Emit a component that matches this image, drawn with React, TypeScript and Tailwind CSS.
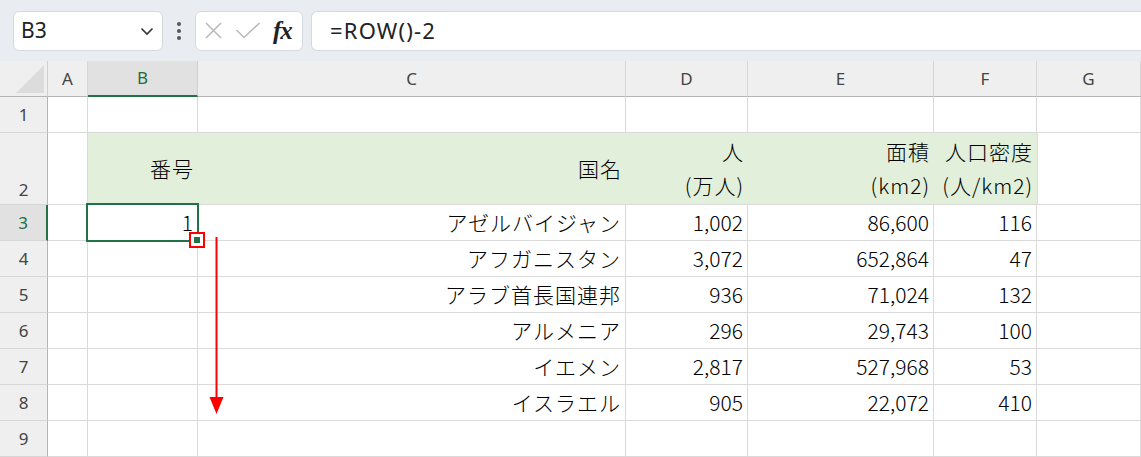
import React from "react";

const COLS = ["A", "B", "C", "D", "E", "F", "G"];

const rows: { n: number; c: string; d: string; e: string; f: string }[] = [
  { n: 3, c: "アゼルバイジャン", d: "1,002", e: "86,600", f: "116" },
  { n: 4, c: "アフガニスタン", d: "3,072", e: "652,864", f: "47" },
  { n: 5, c: "アラブ首長国連邦", d: "936", e: "71,024", f: "132" },
  { n: 6, c: "アルメニア", d: "296", e: "29,743", f: "100" },
  { n: 7, c: "イエメン", d: "2,817", e: "527,968", f: "53" },
  { n: 8, c: "イスラエル", d: "905", e: "22,072", f: "410" },
  { n: 9, c: "", d: "", e: "", f: "" },
];

const grid =
  "grid grid-cols-[48px_40px_110px_428px_122px_186px_103px_1fr]";
const cell = "border-r border-b border-[#dadada] px-1 flex items-center justify-end";
const rowHead =
  "border-r border-b border-r-[#b5b5b5] border-b-[#d6d6d6] bg-[#efefef] flex items-center justify-center text-[17px] text-[#444] font-['Noto_Sans',sans-serif]";
const head2 =
  "bg-[#e2efda] border-b border-[#dadada] flex flex-col items-end justify-end pr-1 pb-[2px] leading-[34px] tracking-[1px] whitespace-nowrap";

function FormulaBar() {
  return (
    <div className="h-[61px] bg-[#e9edf1] flex items-center pl-[13px] font-['Noto_Sans',sans-serif]">
      <div className="w-[150px] h-[40px] bg-white rounded-md border border-[#d6d9dd] flex items-center pl-[7px] pr-[8px] justify-between">
        <span className="text-[21px] text-[#222]">B3</span>
        <svg width="14" height="10" viewBox="0 0 14 10">
          <path d="M1.5 2.5 L7 8 L12.5 2.5" fill="none" stroke="#333" strokeWidth="1.6" />
        </svg>
      </div>
      <div className="w-[32px] flex flex-col items-center gap-[3px]">
        <span className="w-[4px] h-[4px] rounded-full bg-[#555]" />
        <span className="w-[4px] h-[4px] rounded-full bg-[#555]" />
        <span className="w-[4px] h-[4px] rounded-full bg-[#555]" />
      </div>
      <div className="w-[108px] h-[40px] bg-white rounded-md border border-[#d6d9dd] flex items-center pl-[8px] gap-[12px]">
        <svg width="19" height="19" viewBox="0 0 19 19">
          <path d="M2 2 L17 17 M17 2 L2 17" stroke="#b9b9b9" strokeWidth="1.6" />
        </svg>
        <svg width="26" height="19" viewBox="0 0 26 19">
          <path d="M1.5 9 L9 16.5 L24.5 2" fill="none" stroke="#b9b9b9" strokeWidth="1.6" />
        </svg>
        <span className="text-[25px] italic font-bold font-['Liberation_Serif',serif] text-[#222] tracking-[-1px] leading-none">
          fx
        </span>
      </div>
      <div className="ml-[8px] flex-1 h-[40px] bg-white rounded-l-md border border-r-0 border-[#d6d9dd] flex items-center pl-[18px]">
        <span className="text-[22px] text-[#222] tracking-[1.2px]">=ROW()-2</span>
      </div>
    </div>
  );
}

export default function App() {
  return (
    <div className="relative w-[1141px] h-[457px] overflow-hidden bg-white">
      <FormulaBar />
      <div className="font-['Noto_Sans_CJK_JP',sans-serif] font-light text-[21px] text-black">
        {/* column headers */}
        <div className={`${grid} h-[36px]`}>
          <div className="bg-[#efefef] border-r border-b border-r-[#d0d0d0] border-b-[#b5b5b5] relative">
            <svg className="absolute right-[3px] bottom-[3px]" width="28" height="28" viewBox="0 0 28 28">
              <polygon points="28,0 28,28 0,28" fill="#dcdcdc" />
            </svg>
          </div>
          {COLS.map((c) => (
            <div
              key={c}
              className={
                c === "B"
                  ? "bg-[#e1e1e1] border-r border-r-[#d0d0d0] border-b-2 border-b-[#217346] flex items-center justify-center text-[17px] font-normal text-[#1e6e42] font-['Noto_Sans',sans-serif]"
                  : "bg-[#efefef] border-r border-r-[#d6d6d6] border-b border-b-[#b5b5b5] flex items-center justify-center text-[17px] font-normal text-[#444] font-['Noto_Sans',sans-serif]"
              }
            >
              {c}
            </div>
          ))}
        </div>

        {/* row 1 */}
        <div className={`${grid} h-[36px]`}>
          <div className={`${rowHead} font-normal`}>1</div>
          {COLS.map((c) => (
            <div key={c} className={cell} />
          ))}
        </div>

        {/* row 2: table headings */}
        <div className={`${grid} h-[72px]`}>
          <div className="border-r border-b border-r-[#b5b5b5] border-b-[#d6d6d6] bg-[#efefef] flex items-end justify-center pb-[1px] leading-[26px] text-[17px] font-normal text-[#444] font-['Noto_Sans',sans-serif]">
            2
          </div>
          <div className={cell} />
          <div className="bg-[#e2efda] border-b border-[#dadada] flex items-center justify-end pr-1 tracking-[1px]">
            番号
          </div>
          <div className="bg-[#e2efda] border-b border-[#dadada] flex items-center justify-end pr-1 tracking-[1px]">
            国名
          </div>
          <div className={head2}>
            <span>人</span>
            <span>(万人)</span>
          </div>
          <div className={head2}>
            <span>面積</span>
            <span>(km2)</span>
          </div>
          <div className={head2}>
            <span>人口密度</span>
            <span>(人/km2)</span>
          </div>
          <div className={`${cell} border-l`} />
        </div>

        {/* data rows */}
        {rows.map((r) => (
          <div key={r.n} className={`${grid} h-[36px]`}>
            <div
              className={
                r.n === 3
                  ? "border-r-2 border-b border-r-[#217346] border-b-[#d6d6d6] bg-[#e1e1e1] flex items-center justify-center text-[17px] font-normal text-[#1e6e42] font-['Noto_Sans',sans-serif]"
                  : `${rowHead} font-normal`
              }
            >
              {r.n}
            </div>
            <div className={cell} />
            <div className={cell}>{r.n === 3 ? "1" : ""}</div>
            <div className={`${cell} tracking-[1px]`}>{r.c}</div>
            <div className={cell}>{r.d}</div>
            <div className={cell}>{r.e}</div>
            <div className={cell}>{r.f}</div>
            <div className={cell} />
          </div>
        ))}
      </div>

      {/* selection of B3 */}
      <div className="absolute left-[86px] top-[203px] w-[113px] h-[39px] border-2 border-[#217346] pointer-events-none" />
      <div className="absolute left-[189px] top-[232px] w-[16px] h-[16px] border-2 border-[#ff0000] bg-white flex items-center justify-center">
        <div className="w-[6px] h-[6px] bg-[#217346]" />
      </div>

      {/* drag arrow */}
      <svg className="absolute left-[205px] top-[236px]" width="24" height="180" viewBox="0 0 24 180">
        <line x1="11.5" y1="1" x2="11.5" y2="165" stroke="#ff0000" strokeWidth="2" />
        <polygon points="4.5,161 18.5,161 11.5,178" fill="#ff0000" />
      </svg>
    </div>
  );
}
